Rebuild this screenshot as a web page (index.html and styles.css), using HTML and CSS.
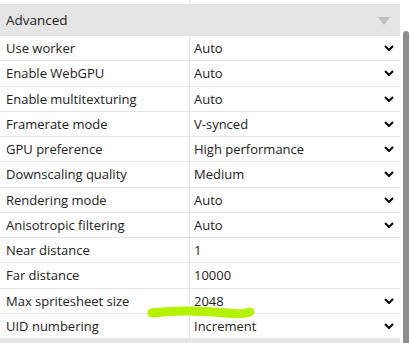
FILE: index.html
```html
<!DOCTYPE html>
<html>
<head>
<meta charset="utf-8">
<link rel="stylesheet" href="styles.css">
</head>
<body>
<div class="page">
  <div class="content">
    <div class="row stub"><div class="cell name"></div><div class="cell value"></div></div>
    <div class="section">
      <span>Advanced</span>
      <svg class="tri" width="12" height="8" viewBox="0 0 12 8"><path d="M0 0 L12 0 L6 8 Z" fill="#bdbdbd"/></svg>
    </div>
    <div class="row"><div class="cell name">Use worker</div><div class="cell value">Auto<svg class="chev" viewBox="0 0 10 6"><path d="M1 1 L5 5 L9 1"/></svg></div></div>
    <div class="row"><div class="cell name">Enable WebGPU</div><div class="cell value">Auto<svg class="chev" viewBox="0 0 10 6"><path d="M1 1 L5 5 L9 1"/></svg></div></div>
    <div class="row"><div class="cell name">Enable multitexturing</div><div class="cell value">Auto<svg class="chev" viewBox="0 0 10 6"><path d="M1 1 L5 5 L9 1"/></svg></div></div>
    <div class="row"><div class="cell name">Framerate mode</div><div class="cell value">V-synced<svg class="chev" viewBox="0 0 10 6"><path d="M1 1 L5 5 L9 1"/></svg></div></div>
    <div class="row"><div class="cell name">GPU preference</div><div class="cell value">High performance<svg class="chev" viewBox="0 0 10 6"><path d="M1 1 L5 5 L9 1"/></svg></div></div>
    <div class="row"><div class="cell name">Downscaling quality</div><div class="cell value">Medium<svg class="chev" viewBox="0 0 10 6"><path d="M1 1 L5 5 L9 1"/></svg></div></div>
    <div class="row"><div class="cell name">Rendering mode</div><div class="cell value">Auto<svg class="chev" viewBox="0 0 10 6"><path d="M1 1 L5 5 L9 1"/></svg></div></div>
    <div class="row"><div class="cell name">Anisotropic filtering</div><div class="cell value">Auto<svg class="chev" viewBox="0 0 10 6"><path d="M1 1 L5 5 L9 1"/></svg></div></div>
    <div class="row"><div class="cell name">Near distance</div><div class="cell value">1</div></div>
    <div class="row"><div class="cell name">Far distance</div><div class="cell value">10000</div></div>
    <div class="row hl"><div class="cell name">Max spritesheet size</div><div class="cell value">2048<svg class="chev" viewBox="0 0 10 6"><path d="M1 1 L5 5 L9 1"/></svg></div>
      <svg class="mark" width="110" height="16" viewBox="0 0 110 16"><path d="M6 9 C 30 6, 60 7, 80 9 S 100 9, 104 8" /></svg>
    </div>
    <div class="row last"><div class="cell name">UID numbering</div><div class="cell value">Increment<svg class="chev" viewBox="0 0 10 6"><path d="M1 1 L5 5 L9 1"/></svg></div></div>
    <div class="foot"></div>
  </div>
  <div class="scroll"></div>
</div>
</body>
</html>
```
FILE: styles.css
```css
html, body {
  margin: 0;
  padding: 0;
  background: #fff;
}
body {
  font-family: "Open Sans", "Noto Sans", sans-serif;
  font-size: 13px;
  color: #222;
  width: 409px;
  height: 343px;
  overflow: hidden;
}
.page {
  display: flex;
  gap: 3px;
  height: 343px;
}
.content {
  width: 400px;
  display: flex;
  flex-direction: column;
}
.row {
  display: grid;
  grid-template-columns: 190px 1fr;
  height: 24.25px;
  border-bottom: 1px solid #e4e4e4;
  position: relative;
}
.row.stub {
  height: 4px;
  border-bottom: none;
}
.row.last {
  border-bottom: none;
}
.cell {
  display: flex;
  align-items: center;
  white-space: nowrap;
}
.name {
  padding-left: 6px;
  border-right: 1px solid #e4e4e4;
}
.value {
  padding-left: 4px;
  padding-right: 6px;
  position: relative;
}
.chev {
  width: 10px;
  height: 6px;
  margin-left: auto;
  fill: none;
  stroke: #000;
  stroke-width: 2;
}
.section {
  height: 32px;
  background: #e5e5e5;
  display: flex;
  align-items: center;
  padding: 0 10px 0 6px;
  font-size: 13.5px;
}
.section .tri {
  margin-left: auto;
  margin-top: 1px;
}
.foot {
  flex: 1;
  background: #e5e5e5;
}
.scroll {
  width: 6px;
  margin-top: 31px;
  background: #8c8c8c;
  border-radius: 4px 4px 0 0;
}
.mark {
  position: absolute;
  left: 146px;
  top: 15px;
  fill: none;
  stroke: #b5f200;
  stroke-width: 9;
  stroke-linecap: round;
}
```
